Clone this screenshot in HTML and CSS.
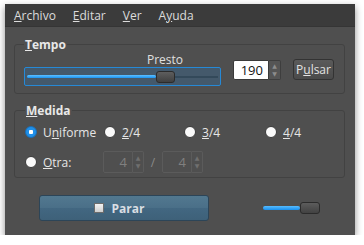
FILE: index.html
```html
<!DOCTYPE html>
<html lang="es">
  <head>
    <meta charset="UTF-8" />
    <title>Metrónomo</title>
    <link rel="stylesheet" href="styles.css">
  </head>
  <body>
    <div class="window">
      <!-- menú -->
      <nav class="menubar">
        <span><u>A</u>rchivo</span>
        <span><u>E</u>ditar</span>
        <span><u>V</u>er</span>
        <span>A<u>y</u>uda</span>
      </nav>

      <main class="content">
        <!-- tempo -->
        <fieldset class="frame tempo">
          <legend><u>T</u>empo</legend>
          <div class="tempo-row">
            <div class="scale">
              <div class="scale-value">Presto</div>
              <div class="groove">
                <div class="fill"></div>
                <div class="handle"></div>
                <div class="rest"></div>
              </div>
            </div>
            <div class="spin">
              <span class="spin-entry">190</span>
              <span class="spin-arrows"><i>▲</i><i>▼</i></span>
            </div>
            <button class="btn">P<u>u</u>lsar</button>
          </div>
        </fieldset>

        <!-- medida -->
        <fieldset class="frame medida">
          <legend><u>M</u>edida</legend>
          <div class="radio-grid">
            <label class="radio"><span class="dot checked"></span><span>U<u>n</u>iforme</span></label>
            <label class="radio"><span class="dot"></span><span><u>2</u>/4</span></label>
            <label class="radio"><span class="dot"></span><span><u>3</u>/4</span></label>
            <label class="radio"><span class="dot"></span><span><u>4</u>/4</span></label>
          </div>
          <div class="other-row">
            <label class="radio"><span class="dot"></span><span><u>O</u>tra:</span></label>
            <div class="spin disabled">
              <span class="spin-entry">4</span>
              <span class="spin-arrows"><i>▲</i><i>▼</i></span>
            </div>
            <span class="slash">/</span>
            <div class="spin disabled">
              <span class="spin-entry">4</span>
              <span class="spin-arrows"><i>▲</i><i>▼</i></span>
            </div>
          </div>
        </fieldset>

        <!-- controles -->
        <div class="bottom-row">
          <button class="btn-stop"><span class="check"></span>Parar</button>
          <div class="volume">
            <div class="volume-fill"></div>
            <div class="volume-handle"></div>
          </div>
        </div>
      </main>
    </div>
  </body>
</html>
```

FILE: styles.css
```css
body {
  margin: 0;
  background-color: #fff;
  font-family: "Open Sans", "DejaVu Sans", sans-serif;
  font-size: 12px;
}

.window {
  margin: 4px 0 0 5px;
  width: 350px;
  height: 231px;
  background-color: #4f4f4f;
  box-shadow: 0 3px 7px rgba(0, 0, 0, 0.45);
  color: #e4e4e4;
  display: flex;
  flex-direction: column;
}

.menubar {
  height: 22px;
  background-color: #3b3b3b;
  display: flex;
  align-items: center;
  gap: 17px;
  padding-left: 9px;
  color: #dcdcdc;
  border-bottom: 1px solid #353535;
}

.content {
  padding: 9px 10px 0 9px;
  display: flex;
  flex-direction: column;
}

.frame {
  margin: 0;
  border: 1px solid #424242;
  border-radius: 3px;
  padding: 0 9px;
  min-width: 0;
}

.frame legend {
  font-weight: bold;
  padding: 0 1px;
  margin-left: 0;
  color: #e8e8e8;
}

.tempo {
  height: 58px;
  box-sizing: border-box;
  padding-top: 0;
}

.tempo-row {
  display: flex;
  align-items: center;
  margin-top: 0;
}

.scale {
  width: 197px;
  display: flex;
  flex-direction: column;
}

.scale-value {
  padding-left: 123px;
  height: 14px;
  line-height: 14px;
  color: #e0e0e0;
}

.groove {
  height: 19px;
  box-sizing: border-box;
  border: 1px solid #2689d6;
  border-radius: 2px;
  background-color: #44596b;
  display: flex;
  align-items: center;
  padding: 0 2px;
}

.fill {
  width: 129px;
  height: 3px;
  border-radius: 2px;
  background: linear-gradient(#5fc0ff, #1a93f0);
}

.handle {
  width: 19px;
  height: 12px;
  box-sizing: border-box;
  border: 1px solid #2b2b2b;
  border-radius: 3px;
  background: linear-gradient(#5e5e5e, #404040);
}

.rest {
  flex: 1;
  height: 2px;
  background-color: #33495a;
}

.spin {
  display: flex;
  height: 20px;
  margin-left: 12px;
}

.spin-entry {
  width: 36px;
  box-sizing: border-box;
  background-color: #fff;
  color: #111;
  text-align: right;
  padding-right: 5px;
  line-height: 18px;
  font-size: 13px;
  border: 1px solid #3a3a3a;
  border-radius: 2px 0 0 2px;
}

.spin-arrows {
  width: 12px;
  box-sizing: border-box;
  border: 1px solid #3e3e3e;
  border-left: none;
  border-radius: 0 2px 2px 0;
  background-color: #555;
  display: flex;
  flex-direction: column;
  align-items: center;
  justify-content: center;
  font-size: 6px;
  line-height: 8px;
  color: #8d8d8d;
}

.spin-arrows i {
  font-style: normal;
}

.btn {
  margin-left: 12px;
  width: 41px;
  height: 21px;
  padding: 0;
  border: 1px solid #333;
  border-radius: 3px;
  background: linear-gradient(#5a5a5a, #4a4a4a);
  color: #e2e2e2;
  font-family: inherit;
  font-size: 12px;
}

.medida {
  margin-top: 8px;
  height: 76px;
  box-sizing: border-box;
  padding: 0 0 0 10px;
}

.radio-grid {
  display: grid;
  grid-template-columns: 79px 80px 81px 60px;
  height: 22px;
  align-items: center;
  margin-top: 2px;
}

.radio {
  display: flex;
  align-items: center;
  gap: 6px;
  color: #e6e6e6;
}

.dot {
  width: 12px;
  height: 12px;
  box-sizing: border-box;
  border-radius: 50%;
  background-color: #fafafa;
  border: 1px solid #3a3a3a;
}

.dot.checked {
  background: radial-gradient(circle, #fff 0 2px, #1f8fe8 2.5px);
  border-color: #1a6fb8;
}

.other-row {
  display: flex;
  align-items: center;
  height: 24px;
  margin-top: 7px;
}

.other-row .radio {
  width: 78px;
}

.other-row .spin {
  margin-left: 0;
  height: 22px;
}

.spin.disabled .spin-entry {
  width: 30px;
  background-color: #4f4f4f;
  border-color: #5b5b5b;
  color: #808080;
  line-height: 20px;
}

.spin.disabled .spin-arrows {
  width: 11px;
  background-color: #4f4f4f;
  border-color: #5b5b5b;
  color: #6f6f6f;
}

.slash {
  width: 18px;
  text-align: center;
  color: #8a8a8a;
}

.bottom-row {
  display: flex;
  align-items: center;
  padding: 17px 0 0 25px;
}

.btn-stop {
  width: 170px;
  height: 26px;
  padding: 0;
  border: 1px solid #2c4558;
  border-radius: 3px;
  background: linear-gradient(#52788f 0, #4a6f88 50%, #426781 51%, #3e6179 100%);
  color: #d9dee3;
  font-family: inherit;
  font-size: 12px;
  font-weight: bold;
  display: flex;
  align-items: center;
  justify-content: center;
  gap: 8px;
}

.check {
  width: 10px;
  height: 10px;
  box-sizing: border-box;
  border: 1px solid #6c6c6c;
  background: linear-gradient(#f2f2f2, #cfcfcf);
  margin-left: -10px;
}

.volume {
  margin-left: 54px;
  display: flex;
  align-items: center;
  height: 12px;
}

.volume-fill {
  width: 37px;
  height: 4px;
  border-radius: 2px;
  background: linear-gradient(#57bcff, #1a90ee);
}

.volume-handle {
  width: 20px;
  height: 12px;
  box-sizing: border-box;
  border: 1px solid #2b2b2b;
  border-radius: 3px;
  background: linear-gradient(#5c5c5c, #424242);
}
```
